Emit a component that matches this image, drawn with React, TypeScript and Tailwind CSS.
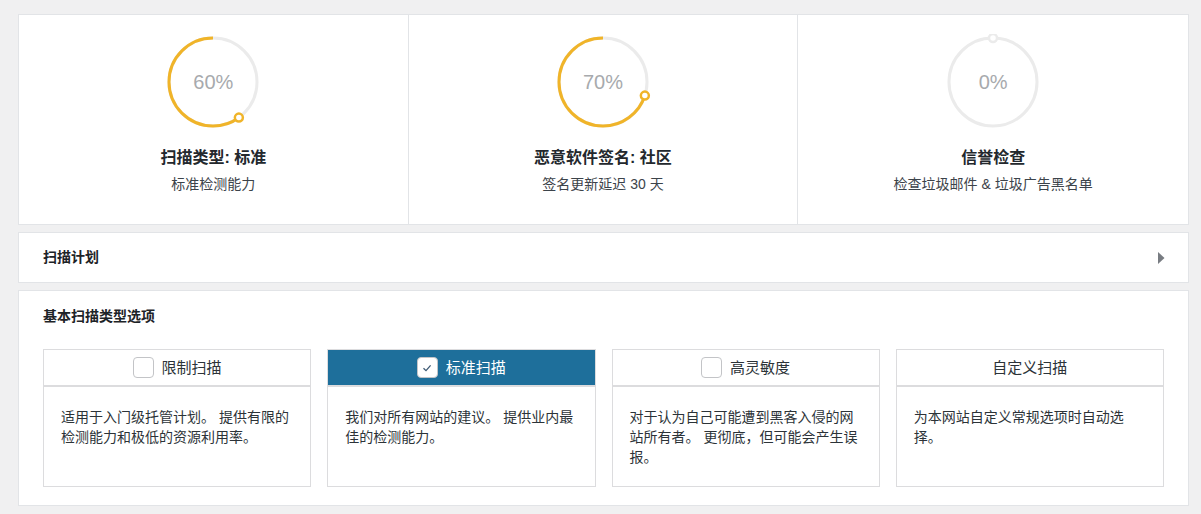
import React from "react";

const FONT = { fontFamily: '"Liberation Sans", "Noto Sans CJK SC", sans-serif' };

function Ring({ pct }: { pct: number }) {
  const r = 44;
  const c = 48;
  const circ = 2 * Math.PI * r;
  const ang = (90 + pct * 3.6) * (Math.PI / 180);
  const ex = c + r * Math.cos(ang);
  const ey = c - r * Math.sin(ang);
  return (
    <div className="relative w-[96px] h-[96px]">
      <svg width="96" height="96" viewBox="0 0 96 96">
        <circle cx={c} cy={c} r={r} fill="none" stroke="#ebebeb" strokeWidth="3" />
        {pct > 0 && (
          <circle
            cx={c}
            cy={c}
            r={r}
            fill="none"
            stroke="#f0b429"
            strokeWidth="3"
            strokeDasharray={`${(circ * pct) / 100} ${circ}`}
            transform={`translate(${2 * c} 0) scale(-1 1) rotate(-90 ${c} ${c})`}
          />
        )}
        <circle
          cx={ex}
          cy={ey}
          r="4"
          fill="#fff"
          stroke={pct > 0 ? "#f0b429" : "#ebebeb"}
          strokeWidth="2.5"
        />
      </svg>
      <div className="absolute inset-0 flex items-center justify-center text-[20px] font-light text-[#a7aaad]">
        {pct}%
      </div>
    </div>
  );
}

function Stat({ pct, title, sub, last }: { pct: number; title: string; sub: string; last?: boolean }) {
  return (
    <div className={`flex flex-col items-center pt-[19px] h-[209px] ${last ? "" : "border-r border-[#e2e4e7]"}`}>
      <Ring pct={pct} />
      <div className="mt-[16px] text-[16px] leading-[24px] font-bold text-[#23282d]">{title}</div>
      <div className="mt-[4px] text-[14px] leading-[20px] text-[#3c434a]">{sub}</div>
    </div>
  );
}

function Option({
  label,
  desc,
  checkbox,
  checked,
}: {
  label: string;
  desc: string;
  checkbox?: boolean;
  checked?: boolean;
}) {
  return (
    <div className="border border-[#dcdcde] bg-white">
      <div
        className={`h-[37px] flex items-center justify-center gap-[8px] border-b-2 border-[#dcdcde] ${
          checked ? "bg-[#1e6f9b] text-white" : "text-[#2c3338]"
        }`}
      >
        {checkbox && (
          <span className="w-[21px] h-[21px] rounded-[4px] border border-[#c3c4c7] bg-white flex items-center justify-center">
            {checked && (
              <svg width="12" height="12" viewBox="0 0 12 12">
                <path d="M2.5 6.2 L5 8.6 L9.6 3.4" fill="none" stroke="#3c5873" strokeWidth="1.3" />
              </svg>
            )}
          </span>
        )}
        <span className="text-[15px] leading-[20px]">{label}</span>
      </div>
      <div className="min-h-[99px] px-[17px] pt-[20px] pb-[10px] text-[14px] leading-[20px] text-[#2c3338]">
        {desc}
      </div>
    </div>
  );
}

export default function App() {
  return (
    <div className="min-h-[514px] bg-[#f0f0f1] pt-[14px] pb-[6px]" style={FONT}>
      <div className="ml-[18px] w-[1171px] flex flex-col gap-[7px]">
        <div className="grid grid-cols-3 bg-white border border-[#e2e4e7]">
          <Stat pct={60} title="扫描类型: 标准" sub="标准检测能力" />
          <Stat pct={70} title="恶意软件签名: 社区" sub="签名更新延迟 30 天" />
          <Stat pct={0} title="信誉检查" sub="检查垃圾邮件 & 垃圾广告黑名单" last />
        </div>

        <div className="h-[51px] bg-white border border-[#e2e4e7] flex items-center justify-between pl-[24px] pr-[23px]">
          <span className="text-[14px] font-semibold text-[#1d2327]">扫描计划</span>
          <svg width="7" height="12" viewBox="0 0 7 12">
            <path d="M0 0 L6.5 6 L0 12 Z" fill="#787c82" />
          </svg>
        </div>

        <div className="bg-white border border-[#e2e4e7] px-[24px] pt-[15px] pb-[18px]">
          <div className="text-[14px] leading-[20px] font-semibold text-[#1d2327] mb-[23px]">基本扫描类型选项</div>
          <div className="grid grid-cols-4 gap-[16px]">
            <Option checkbox label="限制扫描" desc="适用于入门级托管计划。 提供有限的检测能力和极低的资源利用率。" />
            <Option checkbox checked label="标准扫描" desc="我们对所有网站的建议。 提供业内最佳的检测能力。" />
            <Option checkbox label="高灵敏度" desc="对于认为自己可能遭到黑客入侵的网站所有者。 更彻底，但可能会产生误报。" />
            <Option label="自定义扫描" desc="为本网站自定义常规选项时自动选择。" />
          </div>
        </div>
      </div>
    </div>
  );
}
